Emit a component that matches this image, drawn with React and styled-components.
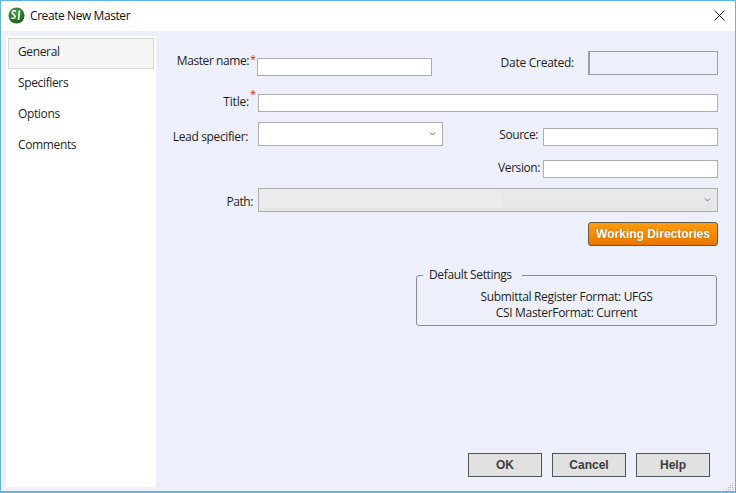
import React from 'react';
import styled, { createGlobalStyle } from 'styled-components';

const Global = createGlobalStyle`
  html, body { margin: 0; padding: 0; background: #fff; }
  * { box-sizing: border-box; }
`;

const Window = styled.div`
  width: 736px; height: 493px; display: flex; flex-direction: column;
  border: 1px solid #5cb6e6; border-bottom-width: 2px; background: #edf0fa; position: relative;
  font-family: "Open Sans", "Noto Sans", sans-serif; font-size: 12px; color: #1e1e1e; letter-spacing: -0.42px;
`;
const TitleBar = styled.div`
  height: 30px; flex: none; background: #fff; display: flex; align-items: center; padding: 0 0 1px 7px; gap: 5px;
`;
const TitleText = styled.span`font-size: 12px; color: #111;`;
const CloseBtn = styled.svg`margin-left: auto; margin-right: 10px; width: 11px; height: 11px;`;
const Body = styled.div`flex: 1; display: flex; min-height: 0;`;
const Sidebar = styled.nav`
  width: 150px; flex: none; margin: 5px 0 4px 5px; background: #fff; padding: 2px; display: flex; flex-direction: column;
`;
const NavItem = styled.div`
  height: 31px; flex: none; display: flex; align-items: center; padding-left: 9px; padding-bottom: 5px;
  border: 1px solid ${p => p.$active ? '#d8d8d8' : 'transparent'};
  background: ${p => p.$active ? '#f5f5f5' : 'transparent'};
  font-size: 12px; letter-spacing: -0.36px;
`;
const Main = styled.main`
  flex: 1; display: flex; flex-direction: column; padding: 20px 17px 14px 0; min-width: 0;
`;
const Row = styled.div`
  display: flex; height: ${p => p.$h}px; margin-top: ${p => p.$mt || 0}px; flex: none;
`;
const Label = styled.label`
  width: ${p => p.$w}px; flex: none; text-align: right; align-self: flex-end; line-height: 18px; height: 18px;
  white-space: nowrap; position: relative; top: ${p => -(p.$up || 0)}px;
  letter-spacing: ${p => p.$ls ?? -0.42}px;
`;
const Star = styled.span`
  width: ${p => p.$w}px; flex: none; color: #e0182d; font-size: 11px; line-height: 10px; align-self: flex-start;
  margin-top: ${p => p.$mt || 0}px; padding-left: 1px;
`;
const TextInput = styled.input`
  width: ${p => p.$w ? p.$w + 'px' : 'auto'}; flex: ${p => p.$w ? 'none' : '1'}; min-width: 0; height: 18px;
  align-self: flex-end; background: #fff; border: 1px solid #aeaeb4; border-radius: 0; padding: 0; outline: none;
`;
const RightGroup = styled.div`margin-left: auto; display: flex; align-items: flex-end; height: 100%;`;
const RightLabel = styled.label`
  margin-right: ${p => p.$mr}px; line-height: 18px; white-space: nowrap; position: relative; top: ${p => p.$dy || 0}px;
  letter-spacing: ${p => p.$ls ?? -0.42}px;
`;
const DateBox = styled.div`
  width: 130px; height: 24px; align-self: flex-start; border: 1px solid #9d9da3; border-left-width: 2px; background: #edf0fa;
`;
const Select = styled.div`
  width: ${p => p.$w ? p.$w + 'px' : 'auto'}; flex: ${p => p.$w ? 'none' : '1'}; height: 24px; position: relative;
  background: ${p => p.$disabled ? 'linear-gradient(#eaeaea, #e6e6e6)' : '#fff'};
  border: 1px solid #aeaeb4; display: flex; align-items: center; justify-content: flex-end; padding-right: 6px;
`;
const Selection = styled.div`
  position: absolute; left: 1px; top: 1px; width: 242px; height: 18px; background: #ececec;
`;
const Chevron = styled.svg`width: 7px; height: 4px;`;
const OrangeRow = styled.div`display: flex; justify-content: flex-end; margin-top: 10px; flex: none;`;
const OrangeButton = styled.button`
  width: 130px; height: 24px; border: 1px solid #5f5a52; border-radius: 3px; padding: 0;
  background: linear-gradient(#ff9a0e, #fb8a00 55%, #e47400); color: #fff;
  font-family: "Liberation Sans", Arial, sans-serif; font-weight: 700; font-size: 12px; letter-spacing: 0;
  text-shadow: 0 0 2px #a85a00;
`;
const FieldsetBox = styled.fieldset`
  width: 301px; height: 59px; margin: 21px 1px 0 auto; padding: 0; flex: none; min-width: 0;
  border: 1px solid #8c8c94; border-radius: 3px; text-align: center;
  display: block;
`;
const Legend = styled.legend`
  margin-left: 6px; padding: 0 10px 0 6px; text-align: left; line-height: 16px; font-size: 12px; letter-spacing: -0.36px;
`;
const FieldLine = styled.div`position: relative; top: 6px; line-height: 16px; height: 16px; letter-spacing: -0.32px;`;
const Footer = styled.div`margin-top: auto; display: flex; justify-content: flex-end; gap: 10px; padding-right: 8px;`;
const DialogButton = styled.button`
  width: 74px; height: 24px; background: #e1e1e1; border: 1px solid #4f5558; border-radius: 0; padding: 0;
  font-family: "Liberation Sans", Arial, sans-serif; font-weight: 700; font-size: 12px; color: #3c3c3c; letter-spacing: 0;
`;
const Grip = styled.svg`position: absolute; right: 1px; bottom: 0; width: 10px; height: 10px;`;

const Logo = () => (
  <svg width="17" height="17" viewBox="0 0 17 17">
    <defs>
      <radialGradient id="lg" cx="0.4" cy="0.3" r="0.8">
        <stop offset="0" stopColor="#4da24a" />
        <stop offset="1" stopColor="#0d5a17" />
      </radialGradient>
    </defs>
    <circle cx="8.5" cy="8.5" r="8" fill="url(#lg)" />
    <path d="M8 4.2C6 3.4 4 4 4.2 5.8c.2 1.7 3 1.9 3 3.8 0 1.7-2.2 2.2-4 1.2" fill="none" stroke="#fff" strokeWidth="1.5" />
    <path d="M11.5 3.5L10.5 13" fill="none" stroke="#fff" strokeWidth="1.7" />
  </svg>
);
const Chev = ({ c = '#666' }) => (
  <Chevron viewBox="0 0 7 4"><path d="M1 .5L3.5 3L6 .5" fill="none" stroke={c} strokeWidth="1" /></Chevron>
);

export default function App() {
  return (
    <Window>
      <Global />
      <TitleBar>
        <Logo />
        <TitleText>Create New Master</TitleText>
        <CloseBtn viewBox="0 0 11 11"><path d="M.5.5L10.5 10.5M10.5.5L.5 10.5" stroke="#222" strokeWidth="1" fill="none" /></CloseBtn>
      </TitleBar>
      <Body>
        <Sidebar>
          <NavItem $active>General</NavItem>
          <NavItem>Specifiers</NavItem>
          <NavItem>Options</NavItem>
          <NavItem>Comments</NavItem>
        </Sidebar>
        <Main>
          <Row $h={25}>
            <Label $w={93} $up={6}>Master name:</Label>
            <Star $w={8} $mt={3}>*</Star>
            <TextInput $w={175} />
            <RightGroup>
              <RightLabel $mr={14} $dy={-4} $ls={-0.27}>Date Created:</RightLabel>
              <DateBox />
            </RightGroup>
          </Row>
          <Row $h={18} $mt={18}>
            <Label $w={93} $up={1} $ls={-0.2}>Title:</Label>
            <Star $w={9} $mt={-5}>*</Star>
            <TextInput />
          </Row>
          <Row $h={24} $mt={10}>
            <Label $w={92} $ls={-0.36}>Lead specifier:</Label>
            <Star $w={10} />
            <Select $w={185}><Chev /></Select>
            <RightGroup>
              <RightLabel $mr={5} $dy={-2}>Source:</RightLabel>
              <TextInput $w={175} />
            </RightGroup>
          </Row>
          <Row $h={18} $mt={14}>
            <RightGroup>
              <RightLabel $mr={3} $dy={-1}>Version:</RightLabel>
              <TextInput $w={175} />
            </RightGroup>
          </Row>
          <Row $h={24} $mt={10}>
            <Label $w={97} $up={1}>Path:</Label>
            <Star $w={5} />
            <Select $disabled><Selection /><Chev c="#777" /></Select>
          </Row>
          <OrangeRow><OrangeButton>Working Directories</OrangeButton></OrangeRow>
          <FieldsetBox>
            <Legend>Default Settings</Legend>
            <FieldLine>Submittal Register Format: UFGS</FieldLine>
            <FieldLine>CSI MasterFormat: Current</FieldLine>
          </FieldsetBox>
          <Footer>
            <DialogButton>OK</DialogButton>
            <DialogButton>Cancel</DialogButton>
            <DialogButton>Help</DialogButton>
          </Footer>
        </Main>
      </Body>
      <Grip viewBox="0 0 10 10" aria-hidden="true">
        {[[8,2],[6,4],[8,4],[4,6],[6,6],[8,6],[2,8],[4,8],[6,8],[8,8]].map(([x,y]) => <rect key={x+'-'+y} x={x} y={y} width="1" height="1" fill="#b0b4bc" />)}
      </Grip>
    </Window>
  );
}
